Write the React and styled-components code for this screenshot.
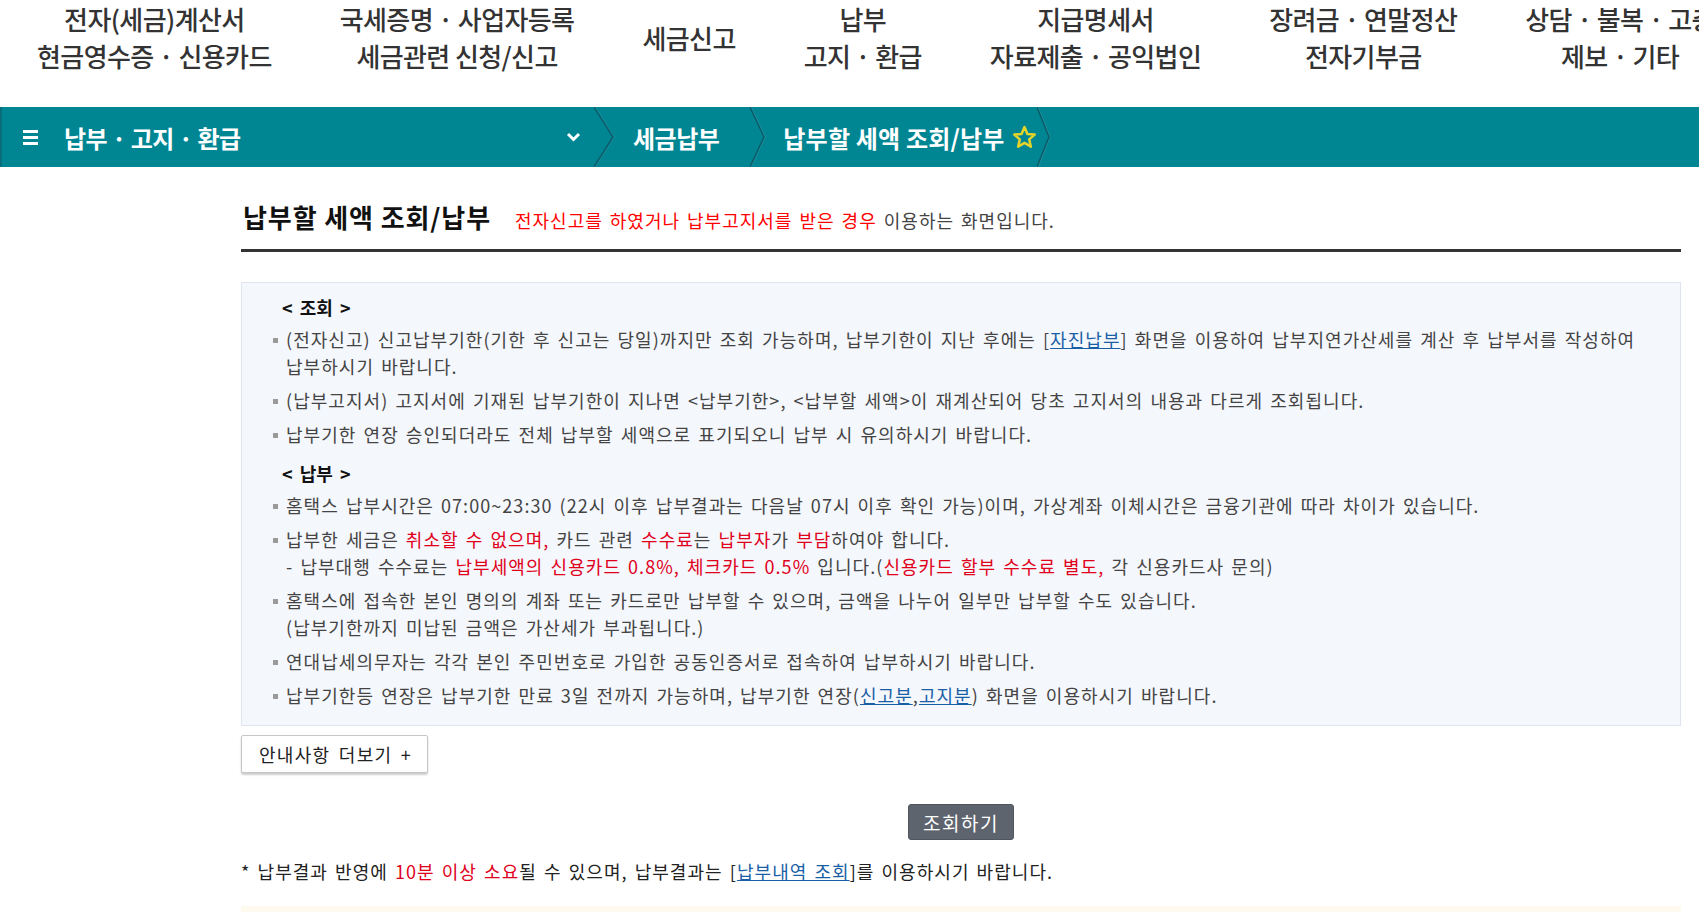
import React from 'react';
import styled, { createGlobalStyle } from 'styled-components';

const GlobalStyle = createGlobalStyle`
  html, body { margin: 0; padding: 0; background: #fff; }
  body {
    font-family: "Noto Sans CJK KR", "Noto Sans", sans-serif;
    color: #333;
    overflow: hidden;
    word-break: keep-all;
  }
  * { box-sizing: border-box; }
`;

const Page = styled.div`
  width: 1699px;
  height: 912px;
  overflow: hidden;
`;

const TopNav = styled.nav`
  display: flex;
  align-items: flex-start;
  gap: 68px;
  height: 107px;
  padding-left: 37px;
  white-space: nowrap;
  overflow: hidden;
`;

const NavItem = styled.a`
  display: flex;
  flex-direction: column;
  align-items: center;
  justify-content: center;
  flex-shrink: 0;
  height: 74px;
  font-size: 26px;
  line-height: 37px;
  font-weight: 500;
  letter-spacing: -0.6px;
  color: #333;
  text-decoration: none;
`;

const Bar = styled.div`
  display: flex;
  align-items: center;
  height: 60px;
  background: #008693;
  color: #fff;
  border-left: 2px solid #066f7b;
`;

const MenuToggle = styled.div`
  display: flex;
  align-items: center;
  width: 592px;
  height: 100%;
  padding-left: 21px;
  padding-right: 12px;
`;

const BarTitle = styled.span`
  flex: 1;
  margin-left: 25px;
  font-size: 24px;
  font-weight: 700;
  letter-spacing: -0.5px;
`;

const Crumb = styled.span`
  margin: 0 ${p => p.$right}px 0 ${p => p.$left}px;
  font-size: 24px;
  font-weight: 700;
  letter-spacing: ${p => p.$spacing}px;
`;

const StarIcon = styled.svg`
  margin-left: 7px;
  flex-shrink: 0;
`;

const SepSvg = styled.svg`
  flex-shrink: 0;
  display: block;
`;

const Main = styled.main`
  margin-left: 241px;
  width: 1440px;
`;

const TitleRow = styled.div`
  display: flex;
  align-items: baseline;
  padding-top: 31px;
  padding-bottom: 14px;
  border-bottom: 3px solid #333;
`;

const Title = styled.h2`
  margin: 0 0 0 2px;
  font-size: 26px;
  line-height: 37px;
  font-weight: 700;
  color: #111;
  letter-spacing: 0.9px;
`;

const Lead = styled.p`
  margin: 0 0 0 24px;
  font-size: 18px;
  letter-spacing: 1px;
  word-spacing: 2px;
  color: #444;
`;

const Red = styled.span`
  color: ${p => (p.$bright ? '#ff0000' : '#e0001b')};
`;

const TextLink = styled.a`
  color: #1a5fa6;
  text-decoration: underline;
`;

const InfoBox = styled.section`
  margin-top: 30px;
  background: #f4f7fc;
  border: 1px solid #dfe5ee;
  padding: 11px 18px 16px 31px;
`;

const SectionHead = styled.h3`
  margin: ${p => (p.$first ? '0' : '12px')} 0 5px 9px;
  font-size: 18px;
  line-height: 27px;
  font-weight: 700;
  color: #111;
  word-spacing: 3px;
`;

const List = styled.ul`
  margin: 0;
  padding: 0;
  list-style: none;
`;

const Item = styled.li`
  display: grid;
  grid-template-columns: 13px 1fr;
  font-size: 18px;
  line-height: 27px;
  letter-spacing: 1.05px;
  word-spacing: 2px;
  color: #444;
  & + & { margin-top: 7px; }
`;

const Marker = styled.span`
  width: 5px;
  height: 5px;
  margin-top: 12px;
  background: #9a9a9a;
`;

const MoreButton = styled.button`
  display: block;
  margin-top: 9px;
  height: 38px;
  padding: 0 15px 0 17px;
  background: #fff;
  border: 1px solid #c6c6c6;
  border-radius: 2px;
  box-shadow: 0 2px 2px rgba(0, 0, 0, 0.2);
  font-family: "Noto Sans CJK KR", sans-serif;
  font-size: 18px;
  letter-spacing: 1.3px;
  word-spacing: 3px;
  color: #222;
`;

const Actions = styled.div`
  display: flex;
  justify-content: center;
  margin-top: 31px;
`;

const SearchButton = styled.button`
  width: 106px;
  height: 36px;
  padding: 0;
  background: #5e646d;
  color: #fff;
  border: 1px solid #50565e;
  border-radius: 3px;
  font-family: "Noto Sans CJK KR", sans-serif;
  font-size: 19px;
  letter-spacing: 1.5px;
`;

const Note = styled.p`
  margin: 18px 0 0;
  font-size: 18px;
  line-height: 27px;
  letter-spacing: 1.05px;
  word-spacing: 2px;
  color: #222;
`;

const NoticeBox = styled.div`
  margin-top: 21px;
  height: 60px;
  background: #fffaf0;
`;

const Sep = ({ w = 18 }) => (
  <SepSvg width={w} height="60" viewBox={`0 0 ${w} 60`}>
    <polyline points={`1,0 ${w - 2},30 1,60`} fill="none" stroke="#2a9ba6" strokeWidth="1" />
    <polyline points={`0,0 ${w - 3},30 0,60`} fill="none" stroke="#0b5d6a" strokeWidth="1.6" />
  </SepSvg>
);

const navItems = [
  ['전자(세금)계산서', '현금영수증 · 신용카드'],
  ['국세증명 · 사업자등록', '세금관련 신청/신고'],
  ['세금신고'],
  ['납부', '고지 · 환급'],
  ['지급명세서', '자료제출 · 공익법인'],
  ['장려금 · 연말정산', '전자기부금'],
  ['상담 · 불복 · 고충', '제보 · 기타'],
];

export default function App() {
  return (
    <Page>
      <GlobalStyle />
      <TopNav>
        {navItems.map((lines, i) => (
          <NavItem key={i}>
            {lines.map(l => (
              <span key={l}>{l}</span>
            ))}
          </NavItem>
        ))}
      </TopNav>

      <Bar>
        <MenuToggle>
          <svg width="16" height="17" viewBox="0 0 16 17">
            <rect x="0" y="1" width="15" height="3" fill="#fff" />
            <rect x="0" y="7" width="15" height="3" fill="#fff" />
            <rect x="0" y="13" width="15" height="3" fill="#fff" />
          </svg>
          <BarTitle>납부 · 고지 · 환급</BarTitle>
          <svg width="17" height="11" viewBox="0 0 17 11">
            <polyline points="3,2 8.5,7.5 14,2" fill="none" stroke="#fff" strokeWidth="3" />
          </svg>
        </MenuToggle>
        <Sep w={22} />
        <Crumb $left={17} $right={31} $spacing={-0.5}>세금납부</Crumb>
        <Sep w={17} />
        <Crumb $left={16} $right={0} $spacing={0.2}>납부할 세액 조회/납부</Crumb>
        <StarIcon width="25" height="24" viewBox="0 0 24 23">
          <polygon
            points="12,2 14.8,8.6 21.8,9.2 16.5,13.8 18.1,20.8 12,17.1 5.9,20.8 7.5,13.8 2.2,9.2 9.2,8.6"
            fill="none"
            stroke="#e3d42a"
            strokeWidth="2.4"
            strokeLinejoin="round"
          />
        </StarIcon>
        <Sep w={15} />
      </Bar>

      <Main>
        <TitleRow>
          <Title>납부할 세액 조회/납부</Title>
          <Lead>
            <Red $bright>전자신고를 하였거나 납부고지서를 받은 경우</Red> 이용하는 화면입니다.
          </Lead>
        </TitleRow>

        <InfoBox>
          <SectionHead $first>&lt; 조회 &gt;</SectionHead>
          <List>
            <Item>
              <Marker />
              <span>
                (전자신고) 신고납부기한(기한 후 신고는 당일)까지만 조회 가능하며, 납부기한이 지난 후에는 [
                <TextLink>자진납부</TextLink>] 화면을 이용하여 납부지연가산세를 계산 후 납부서를 작성하여 납부하시기
                바랍니다.
              </span>
            </Item>
            <Item>
              <Marker />
              <span>
                (납부고지서) 고지서에 기재된 납부기한이 지나면 &lt;납부기한&gt;, &lt;납부할 세액&gt;이 재계산되어 당초
                고지서의 내용과 다르게 조회됩니다.
              </span>
            </Item>
            <Item>
              <Marker />
              <span>납부기한 연장 승인되더라도 전체 납부할 세액으로 표기되오니 납부 시 유의하시기 바랍니다.</span>
            </Item>
          </List>

          <SectionHead>&lt; 납부 &gt;</SectionHead>
          <List>
            <Item>
              <Marker />
              <span>
                홈택스 납부시간은 07:00~23:30 (22시 이후 납부결과는 다음날 07시 이후 확인 가능)이며, 가상계좌
                이체시간은 금융기관에 따라 차이가 있습니다.
              </span>
            </Item>
            <Item>
              <Marker />
              <span>
                납부한 세금은 <Red>취소할 수 없으며,</Red> 카드 관련 <Red>수수료</Red>는 <Red>납부자</Red>가{' '}
                <Red>부담</Red>하여야 합니다.
                <br />- 납부대행 수수료는 <Red>납부세액의 신용카드 0.8%, 체크카드 0.5%</Red> 입니다.(
                <Red>신용카드 할부 수수료 별도,</Red> 각 신용카드사 문의)
              </span>
            </Item>
            <Item>
              <Marker />
              <span>
                홈택스에 접속한 본인 명의의 계좌 또는 카드로만 납부할 수 있으며, 금액을 나누어 일부만 납부할 수도
                있습니다.
                <br />
                (납부기한까지 미납된 금액은 가산세가 부과됩니다.)
              </span>
            </Item>
            <Item>
              <Marker />
              <span>연대납세의무자는 각각 본인 주민번호로 가입한 공동인증서로 접속하여 납부하시기 바랍니다.</span>
            </Item>
            <Item>
              <Marker />
              <span>
                납부기한등 연장은 납부기한 만료 3일 전까지 가능하며, 납부기한 연장(<TextLink>신고분</TextLink>,
                <TextLink>고지분</TextLink>) 화면을 이용하시기 바랍니다.
              </span>
            </Item>
          </List>
        </InfoBox>

        <MoreButton>안내사항 더보기 +</MoreButton>

        <Actions>
          <SearchButton>조회하기</SearchButton>
        </Actions>

        <Note>
          * 납부결과 반영에 <Red>10분 이상 소요</Red>될 수 있으며, 납부결과는 [<TextLink>납부내역 조회</TextLink>]를
          이용하시기 바랍니다.
        </Note>
        <NoticeBox />
      </Main>
    </Page>
  );
}
